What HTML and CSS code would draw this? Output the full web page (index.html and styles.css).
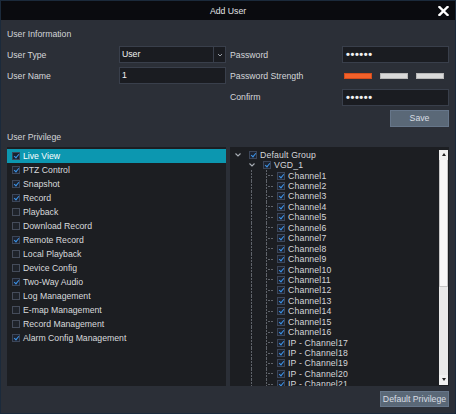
FILE: index.html
```html
<!DOCTYPE html>
<html lang="en">
<head>
  <meta charset="UTF-8" />
  <title>Add User</title>
  <link rel="stylesheet" href="styles.css">
</head>
<body>
  <div class="dialog">
    <div class="titlebar">
      <span></span>
      <span class="title">Add User</span>
      <button class="close" title="Close">
        <svg width="11" height="10" viewBox="0 0 11 10"><path d="M1.5 1 L9.5 9 M9.5 1 L1.5 9" stroke="#fff" stroke-width="2.4" stroke-linecap="square"/></svg>
      </button>
    </div>

    <div class="content">
      <div class="section-title">User Information</div>

      <div class="info-grid">
        <label>User Type</label>
        <div class="select">
          <span class="value">User</span>
          <span class="arrow"><svg width="6" height="4" viewBox="0 0 6 4"><path d="M1 1 L3 3 L5 1" fill="none" stroke="#9aa0a8" stroke-width="1"/></svg></span>
        </div>
        <label class="right-label">Password</label>
        <div class="input pwd">&bull;&bull;&bull;&bull;&bull;&bull;</div>

        <label>User Name</label>
        <div class="input">1</div>
        <label class="right-label">Password Strength</label>
        <div class="strength">
          <span class="bar weak"></span>
          <span class="bar"></span>
          <span class="bar"></span>
        </div>

        <label class="right-label col3">Confirm</label>
        <div class="input pwd">&bull;&bull;&bull;&bull;&bull;&bull;</div>

        <button class="btn save">Save</button>
      </div>

      <div class="section-title priv">User Privilege</div>

      <div class="panels">
        <ul class="priv-list">
          <li class="selected"><i class="cb on"></i>Live View</li>
          <li><i class="cb on"></i>PTZ Control</li>
          <li><i class="cb on"></i>Snapshot</li>
          <li><i class="cb on"></i>Record</li>
          <li><i class="cb"></i>Playback</li>
          <li><i class="cb"></i>Download Record</li>
          <li><i class="cb on"></i>Remote Record</li>
          <li><i class="cb"></i>Local Playback</li>
          <li><i class="cb"></i>Device Config</li>
          <li><i class="cb on"></i>Two-Way Audio</li>
          <li><i class="cb"></i>Log Management</li>
          <li><i class="cb"></i>E-map Management</li>
          <li><i class="cb"></i>Record Management</li>
          <li><i class="cb on"></i>Alarm Config Management</li>
        </ul>

        <div class="tree-panel">
          <ul class="tree" id="tree">
            <li class="lvl0"><span class="twist"><svg width="10" height="10" viewBox="0 0 10 10"><path d="M2.5 3.5 L5 6 L7.5 3.5" fill="none" stroke="#a8adb4" stroke-width="1.1"/></svg></span><i class="cb on"></i>Default Group</li>
            <li class="lvl1"><span class="twist"><svg width="10" height="10" viewBox="0 0 10 10"><path d="M2.5 3.5 L5 6 L7.5 3.5" fill="none" stroke="#a8adb4" stroke-width="1.1"/></svg></span><i class="cb on"></i>VGD_1</li>
          </ul>
          <div class="scrollbar">
            <div class="sb-btn up"></div>
            <div class="sb-thumb"></div>
            <div class="sb-track"></div>
            <div class="sb-btn down"></div>
          </div>
        </div>
      </div>

      <div class="footer">
        <button class="btn">Default Privilege</button>
      </div>
    </div>
  </div>

  <script>
    // channel rows under VGD_1 (list scrolls past 21)
    const tree = document.getElementById('tree');
    for (let i = 1; i <= 21; i++) {
      const li = document.createElement('li');
      li.className = 'lvl2';
      li.innerHTML = '<i class="cb on"></i>' + (i > 16 ? 'IP - Channel' + i : 'Channel' + i);
      tree.appendChild(li);
    }
  </script>
</body>
</html>
```

FILE: styles.css
```css
* {
  box-sizing: border-box;
}

body {
  margin: 0;
  background: #2b2f37;
  font-family: "Liberation Sans", Arial, sans-serif;
  font-size: 8.7px;
  color: #d6d8dc;
  overflow: hidden;
}

.dialog {
  width: 456px;
  height: 414px;
  border: 1px solid #1b2a3b;
  background: #2b2f37;
  display: flex;
  flex-direction: column;
}

.titlebar {
  height: 19px;
  background: #0a0b0f;
  display: grid;
  grid-template-columns: 1fr auto 1fr;
  align-items: center;
}

.title {
  color: #e2e3e5;
}

.close {
  justify-self: end;
  margin-right: 6px;
  margin-top: 1px;
  background: none;
  border: none;
  padding: 0;
  width: 11px;
  height: 10px;
  display: flex;
}

.content {
  padding: 7px 6px 0 6px;
  display: flex;
  flex-direction: column;
}

.section-title {
  height: 14px;
  line-height: 14px;
  color: #d2d4d8;
}

.info-grid {
  margin-top: 5px;
  display: grid;
  grid-template-columns: 112px 107px 116px 107px;
  grid-template-rows: repeat(4, 17px);
  row-gap: 4.33px;
  align-items: center;
}

.info-grid label {
  color: #d4d6da;
}

.right-label {
  padding-left: 4px;
}

.col3 {
  grid-column: 3;
}

.input,
.select {
  height: 17px;
  background: #1a1c21;
  border: 1px solid #393f4b;
  color: #f2f2f2;
  padding: 0 2px;
  line-height: 15px;
}

.select {
  display: flex;
  padding-right: 0;
}

.select .value {
  flex: 1;
}

.select .arrow {
  width: 12px;
  border-left: 1px solid #393f4b;
  display: flex;
  align-items: center;
  justify-content: center;
}

.pwd {
  font-size: 11px;
  letter-spacing: 0.6px;
  padding-left: 3px;
  font-weight: bold;
}

.strength {
  display: flex;
  gap: 8px;
  padding-left: 2px;
}

.bar {
  width: 28px;
  height: 6px;
  background: #d9d9d9;
  border: 1px solid #b8b8b8;
}

.bar.weak {
  background: #f2612a;
  border-color: #d24c1c;
}

.btn {
  font-family: inherit;
  font-size: 8.7px;
  color: #d9dee3;
  background: #5a6877;
  border: 1px solid #66768a;
  height: 16px;
  padding: 0 4px;
  cursor: pointer;
}

.save {
  grid-column: 4;
  justify-self: end;
  width: 59px;
  height: 17px;
}

.priv {
  margin-top: 3px;
  margin-bottom: 3px;
}

.panels {
  display: grid;
  grid-template-columns: 219px 219px;
  column-gap: 4px;
  height: 239px;
}

.priv-list,
.tree {
  list-style: none;
  margin: 0;
  padding: 0;
}

.priv-list {
  background: #1c1e22;
  padding-top: 2px;
}

.priv-list li {
  height: 14px;
  display: flex;
  align-items: center;
  padding-left: 5px;
  color: #d8dadd;
}

.priv-list li.selected {
  background: #0c97b0;
  color: #fff;
}

.cb {
  position: relative;
  flex: none;
  width: 8px;
  height: 8px;
  border: 1px solid #454c5a;
  background: #1f232a;
  margin-right: 3px;
}

.cb.on {
  border-color: #3c4659;
  background: #1d2330;
}

.cb.on::after {
  content: "";
  position: absolute;
  left: 2px;
  top: 0px;
  width: 2px;
  height: 4px;
  border: solid #3d95ea;
  border-width: 0 1.4px 1.4px 0;
  transform: rotate(40deg);
}

.selected .cb.on {
  background: #172230;
}

.tree-panel {
  background: #1c1e22;
  display: flex;
  overflow: hidden;
}

.tree {
  flex: 1;
  padding-top: 2.5px;
  overflow: hidden;
}

.tree li {
  height: 10.45px;
  display: flex;
  align-items: center;
  white-space: nowrap;
  color: #d4d6da;
  letter-spacing: 0.15px;
}

.twist {
  width: 10px;
  height: 10px;
  display: flex;
  margin-right: 6px;
}

.lvl0 {
  padding-left: 3px;
}

.lvl1 {
  padding-left: 17px;
}

.lvl2 {
  padding-left: 47px;
  background:
    repeating-linear-gradient(to bottom, #5f636a 0 2px, transparent 2px 3px) 21px 0 / 1px 100% no-repeat,
    repeating-linear-gradient(to bottom, #5f636a 0 2px, transparent 2px 3px) 36px 0 / 1px 100% no-repeat,
    repeating-linear-gradient(to right, #5f636a 0 2px, transparent 2px 3px) 38px 50% / 6px 1px no-repeat;
}

.scrollbar {
  width: 9px;
  margin: 3px 1px 1px 0;
  background: #e9e9e9;
  display: flex;
  flex-direction: column;
}

.sb-btn {
  height: 10px;
  background: #f0f0f0;
  display: flex;
  align-items: center;
  justify-content: center;
}

.sb-btn.up::before {
  content: "";
  border: 2.5px solid transparent;
  border-bottom: 3px solid #222;
  border-top: 0;
}

.sb-btn.down::before {
  content: "";
  border: 2.5px solid transparent;
  border-top: 3px solid #222;
  border-bottom: 0;
}

.sb-thumb {
  height: 127px;
  background: #f8f8f8;
  border: 1px solid #c6c6c6;
  border-top: 0;
}

.sb-track {
  flex: 1;
}

.footer {
  display: flex;
  justify-content: flex-end;
  margin-top: 5px;
}

.footer .btn {
  width: 69px;
  padding: 0 1px;
  white-space: nowrap;
}
```
